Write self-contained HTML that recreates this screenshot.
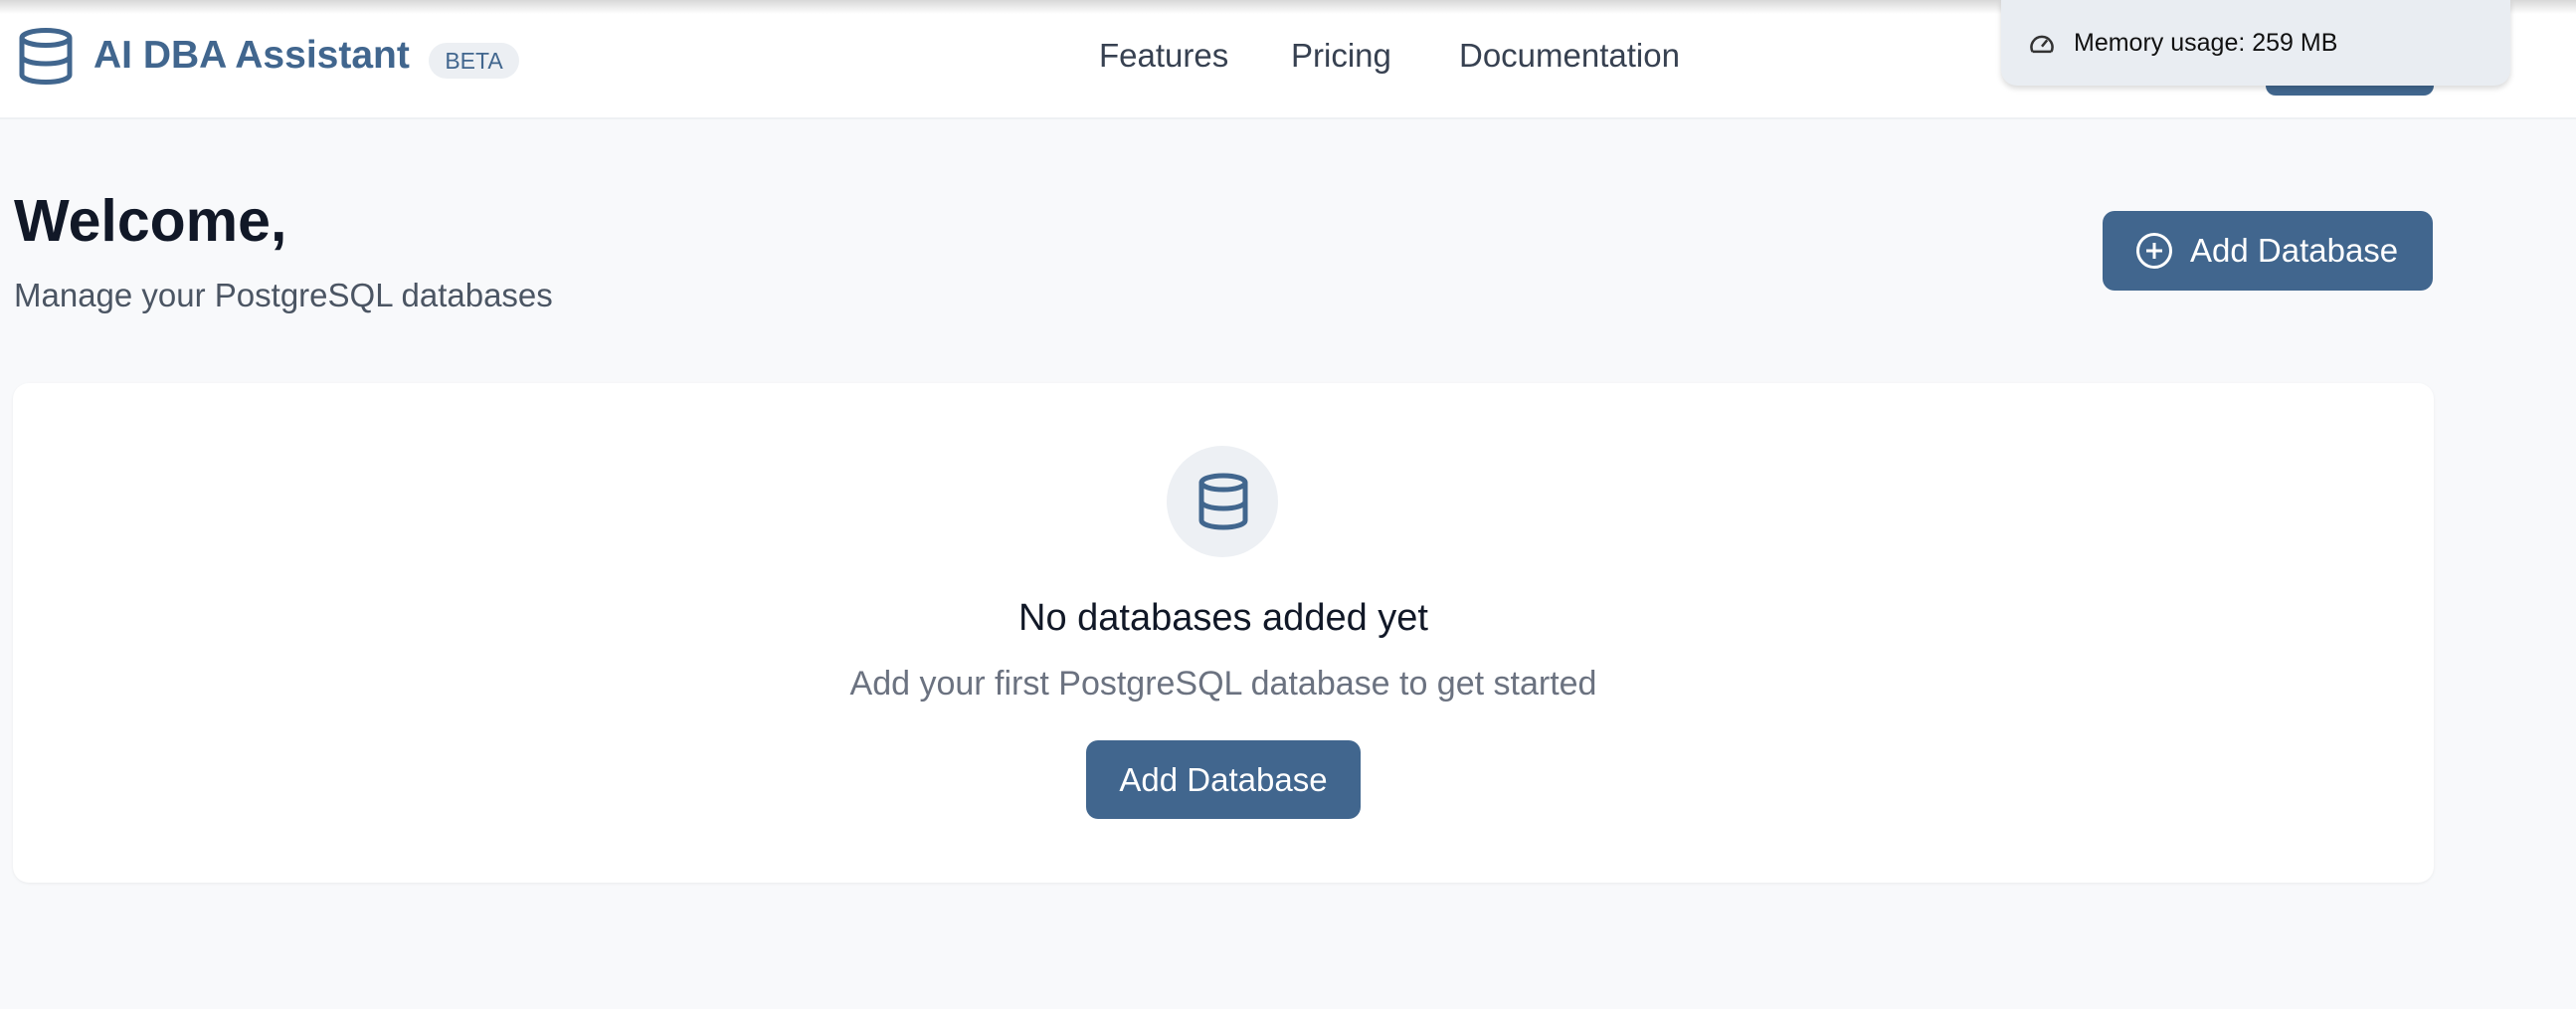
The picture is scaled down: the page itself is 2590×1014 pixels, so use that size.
<!DOCTYPE html>
<html><head><meta charset="utf-8"><style>
*{margin:0;padding:0;box-sizing:border-box}
body{width:2590px;height:1014px;background:#f8f9fb;font-family:"Liberation Sans",sans-serif;position:relative;overflow:hidden}
.hdr{position:absolute;left:0;top:0;width:2590px;height:120px;background:#fff;border-bottom:2px solid #eef0f3}
.topsh{position:absolute;left:0;top:0;width:2590px;height:14px;background:linear-gradient(#d8d8d8,rgba(255,255,255,0))}
.abs{position:absolute}
.btn{position:absolute;background:#41668e;color:#fff;border-radius:12px;display:flex;align-items:center;justify-content:center;font-size:33px}
</style></head><body>
<div class="hdr"></div>
<div class="topsh"></div>
<svg class="abs" style="left:18px;top:28px" width="56" height="57" viewBox="0 0 56 57" fill="none" stroke="#41668e" stroke-width="5">
<ellipse cx="28" cy="10" rx="24" ry="7.5"/><path d="M4 10v37c0 4.5 11 7.5 24 7.5s24-3 24-7.5V10"/><path d="M4 28.5c0 4.5 11 7.5 24 7.5s24-3 24-7.5"/></svg>
<div class="abs" style="left:94px;top:34px;font-size:39px;font-weight:bold;color:#41668e">AI DBA Assistant</div>
<div class="abs" style="left:431px;top:43px;width:91px;height:36px;border-radius:18px;background:#eceff3;color:#41668e;font-size:23px;display:flex;align-items:center;justify-content:center">BETA</div>
<div class="abs" style="left:1105px;top:37px;font-size:33px;color:#374151">Features</div>
<div class="abs" style="left:1298px;top:37px;font-size:33px;color:#374151">Pricing</div>
<div class="abs" style="left:1467px;top:37px;font-size:33px;color:#374151">Documentation</div>
<div class="abs" style="left:2278px;top:60px;width:169px;height:36px;background:#41668e;border-radius:10px"></div>
<div class="abs" style="left:2012px;top:0;width:512px;height:86px;background:#e9edf2;border-radius:0 0 16px 16px;box-shadow:0 3px 6px rgba(0,0,0,.15)">
<svg class="abs" style="left:28px;top:33px" width="26" height="21" viewBox="0 0 24 20" fill="none" stroke="#333" stroke-width="2.4"><path d="M3 18h18M3 18A10 10 0 1 1 21 18"/><path d="M12 13l5-6"/></svg>
<div class="abs" style="left:73px;top:29px;font-size:25px;color:#111">Memory usage: 259 MB</div></div>
<div class="abs" style="left:14px;top:188px;font-size:59px;font-weight:bold;color:#111827">Welcome,</div>
<div class="abs" style="left:14px;top:278px;font-size:33px;color:#4b5563">Manage your PostgreSQL databases</div>
<div class="btn" style="left:2114px;top:212px;width:332px;height:80px;justify-content:flex-start;padding-left:33px">
<svg width="38" height="38" viewBox="0 0 38 38" fill="none" stroke="#fff" stroke-width="3"><circle cx="19" cy="19" r="16.5"/><path d="M19 11v16M11 19h16"/></svg>
<span style="margin-left:17px">Add Database</span></div>
<div class="abs" style="left:13px;top:385px;width:2434px;height:502px;background:#fff;border-radius:16px;box-shadow:0 1px 3px rgba(0,0,0,.06)"></div>
<div class="abs" style="left:1173px;top:448px;width:112px;height:112px;border-radius:50%;background:#edf0f4"></div>
<svg class="abs" style="left:1204px;top:475px" width="52" height="58" viewBox="0 0 52 58" fill="none" stroke="#41668e" stroke-width="5">
<ellipse cx="26" cy="10" rx="22" ry="7"/><path d="M4 10v38c0 4 10 7 22 7s22-3 22-7V10"/><path d="M4 29c0 4 10 7 22 7s22-3 22-7"/></svg>
<div class="abs" style="left:0;width:2460px;top:600px;text-align:center;font-size:38px;color:#111827">No databases added yet</div>
<div class="abs" style="left:0;width:2460px;top:668px;text-align:center;font-size:34px;color:#6b7280">Add your first PostgreSQL database to get started</div>
<div class="btn" style="left:1092px;top:744px;width:276px;height:79px">Add Database</div>
</body></html>
